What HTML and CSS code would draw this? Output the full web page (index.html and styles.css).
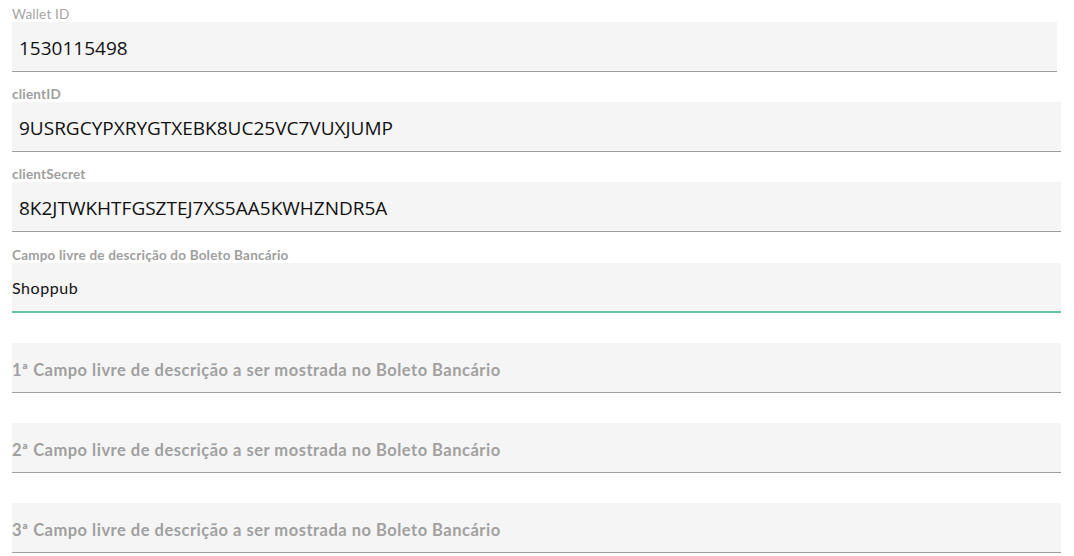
FILE: index.html
```html
<!DOCTYPE html>
<html lang="pt-BR">
<head>
<meta charset="utf-8">
<title>Configuração</title>
<link rel="stylesheet" href="styles.css">
</head>
<body>
<form class="form">
  <div class="field narrow">
    <label class="label label-light" for="wallet">Wallet ID</label>
    <input class="input input-value" id="wallet" type="text" value="1530115498">
  </div>
  <div class="field">
    <label class="label" for="cid">clientID</label>
    <input class="input input-value" id="cid" type="text" value="9USRGCYPXRYGTXEBK8UC25VC7VUXJUMP">
  </div>
  <div class="field">
    <label class="label" for="csec">clientSecret</label>
    <input class="input input-value" id="csec" type="text" value="8K2JTWKHTFGSZTEJ7XS5AA5KWHZNDR5A">
  </div>
  <div class="field field-focus">
    <label class="label" for="desc">Campo livre de descrição do Boleto Bancário</label>
    <input class="input input-focus" id="desc" type="text" value="Shoppub">
  </div>
  <div class="field">
    <div class="label"></div>
    <input class="input input-empty" type="text" placeholder="1ª Campo livre de descrição a ser mostrada no Boleto Bancário">
  </div>
  <div class="field">
    <div class="label"></div>
    <input class="input input-empty" type="text" placeholder="2ª Campo livre de descrição a ser mostrada no Boleto Bancário">
  </div>
  <div class="field">
    <div class="label"></div>
    <input class="input input-empty" type="text" placeholder="3ª Campo livre de descrição a ser mostrada no Boleto Bancário">
  </div>
</form>
</body>
</html>
```

FILE: styles.css
```css
html, body {
  margin: 0;
  padding: 0;
  background: #ffffff;
}

body {
  font-family: Lato, "Open Sans", "Liberation Sans", sans-serif;
}

.form {
  display: flex;
  flex-direction: column;
  gap: 8px;
  padding: 0 13px 0 12px;
  width: 1049px;
}

.field {
  display: flex;
  flex-direction: column;
}

.field.narrow {
  width: 1045px;
}

.label {
  box-sizing: border-box;
  height: 22px;
  padding-top: 7px;
  font-size: 13.5px;
  line-height: 14px;
  font-weight: 700;
  letter-spacing: 0.2px;
  color: #9e9e9e;
  white-space: nowrap;
}

.field-focus .label {
  height: 23px;
  padding-top: 8px;
}

.label-light {
  font-weight: 400;
  color: #a5a5a5;
}

.input {
  box-sizing: border-box;
  display: block;
  width: 100%;
  height: 50px;
  margin: 0;
  border: none;
  border-bottom: 1px solid #9e9e9e;
  border-radius: 0;
  background: #f5f5f5;
  outline: none;
  color: #000;
}

.input-value {
  padding: 2px 0 0 7px;
  font-family: "Open Sans", "Liberation Sans", sans-serif;
  font-size: 19px;
  color: #111;
}

.input-focus {
  height: 50px;
  padding: 0;
  border-bottom: 2px solid #66c2a5;
  font-family: Lato, "Open Sans", sans-serif;
  font-size: 16px;
  letter-spacing: 0.55px;
  color: #111;
}

.input-empty {
  padding: 5px 0 0 0;
  font-family: Lato, "Open Sans", sans-serif;
  font-size: 16.5px;
  font-weight: 700;
  letter-spacing: 0.5px;
}

.input-empty::placeholder {
  color: #a0a0a0;
  opacity: 1;
}
```
